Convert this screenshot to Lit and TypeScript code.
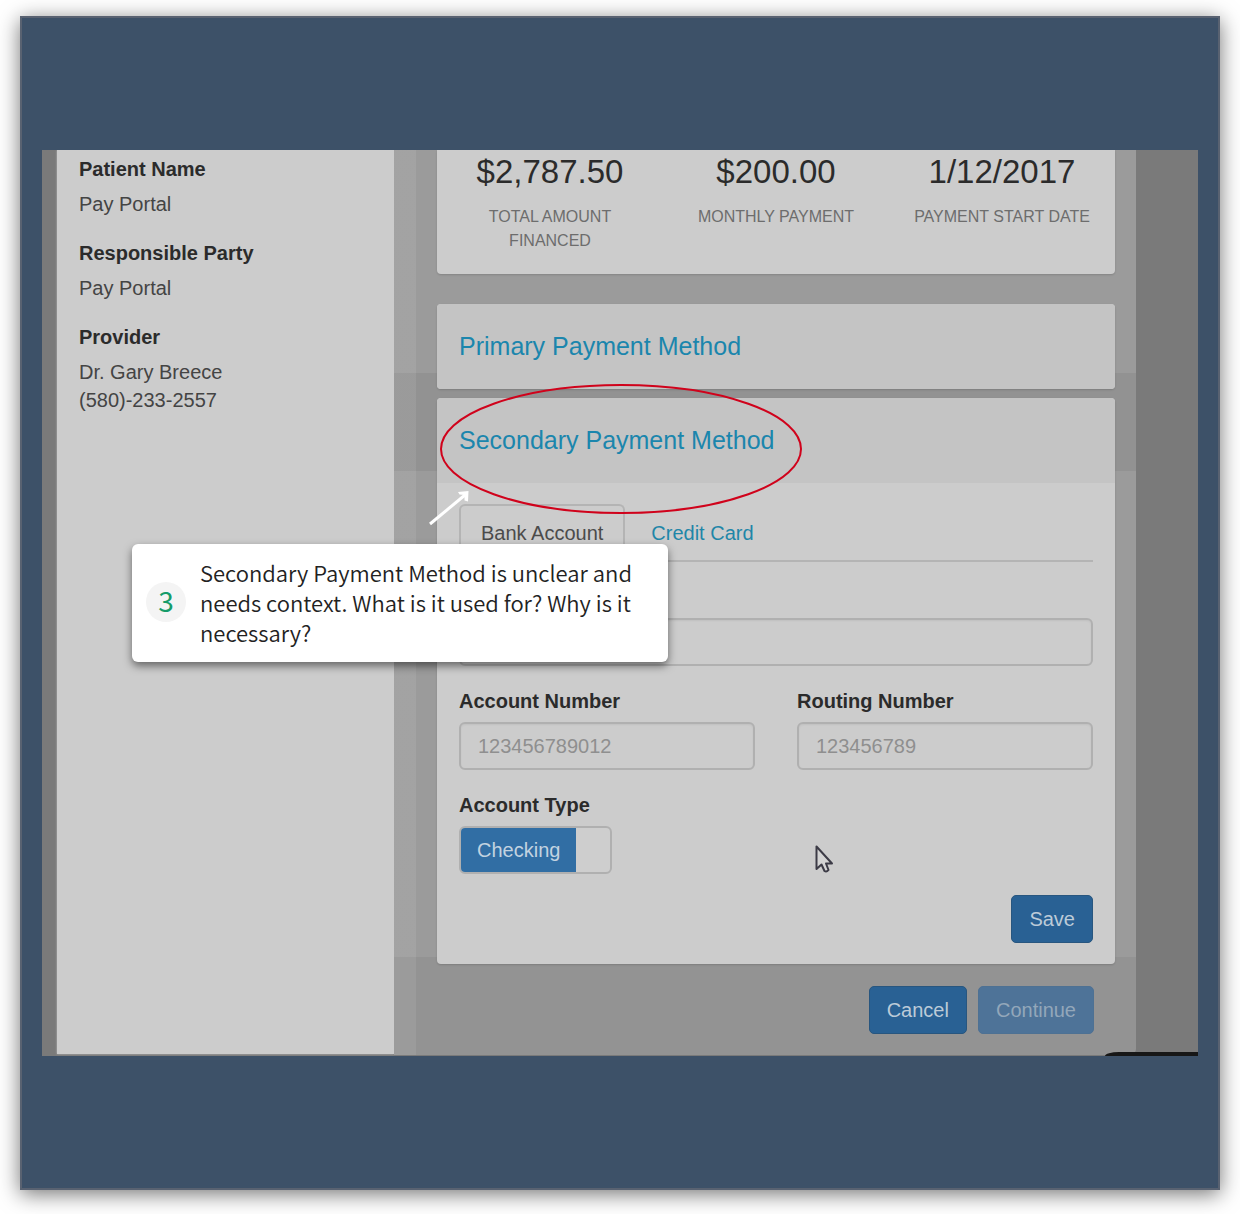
import { LitElement, html, css, svg } from "lit";
import { customElement, state } from "lit/decorators.js";

interface Detail {
  term: string;
  lines: string[];
}

interface Stat {
  value: string;
  label: string;
}

const details: Detail[] = [
  { term: "Patient Name", lines: ["Pay Portal"] },
  { term: "Responsible Party", lines: ["Pay Portal"] },
  { term: "Provider", lines: ["Dr. Gary Breece", "(580)-233-2557"] },
];

const stats: Stat[] = [
  { value: "$2,787.50", label: "TOTAL AMOUNT FINANCED" },
  { value: "$200.00", label: "MONTHLY PAYMENT" },
  { value: "1/12/2017", label: "PAYMENT START DATE" },
];

const pointer = svg`<path d="M1.5 1.5 V24 L6.5 19.5 L9.5 26 Q11.5 27.5 13.5 25 L11 18.5 H17 Z"
  fill="#d4d4d4" stroke="#3c3b46" stroke-width="2" stroke-linejoin="round"/>`;

@customElement("payment-form")
export class PaymentForm extends LitElement {
  @state() private tab = "bank";
  @state() private checking = true;

  static styles = css`
    :host {
      display: block;
      padding: 21px 22px;
    }
    .tabs {
      display: flex;
      gap: 4px;
      height: 58px;
      box-sizing: border-box;
      border-bottom: 2px solid #b4b4b4;
      margin-bottom: 21px;
    }
    .tab {
      font: inherit;
      line-height: 28px;
      height: 58px;
      padding: 0 20px;
      border: 2px solid transparent;
      background: none;
      color: #1f86a8;
      border-radius: 6px 6px 0 0;
    }
    .tab.active {
      color: #4b4b4b;
      background: #cccccc;
      border-color: #b4b4b4;
      border-bottom-color: #cccccc;
    }
    .fields {
      display: grid;
      grid-template-columns: 1fr 1fr;
      gap: 21px 42px;
    }
    .field {
      display: flex;
      flex-direction: column;
      align-items: flex-start;
      gap: 7px;
    }
    .wide {
      grid-column: 1 / -1;
      padding-top: 35px;
    }
    label {
      font-weight: bold;
      line-height: 28px;
      color: #2b2b2b;
    }
    input {
      font: inherit;
      width: 100%;
      height: 48px;
      box-sizing: border-box;
      padding: 0 17px;
      border: 2px solid #b0b0b0;
      border-radius: 6px;
      background: #cccccc;
      color: #444;
      box-shadow: inset 0 1px 2px rgba(0, 0, 0, 0.06);
    }
    input::placeholder {
      color: #8f8f8f;
      opacity: 1;
    }
    .toggle {
      font: inherit;
      display: flex;
      align-items: stretch;
      width: 153px;
      height: 48px;
      padding: 0;
      border: 2px solid #b0b0b0;
      border-radius: 6px;
      background: #cecece;
      overflow: hidden;
    }
    .on {
      display: flex;
      align-items: center;
      padding: 0 16px;
      background: #316ea4;
      color: #c3d3e0;
    }
    .actions {
      display: flex;
      justify-content: flex-end;
      margin-top: 21px;
    }
    .save {
      font: inherit;
      height: 48px;
      padding: 0 17px;
      border: 1px solid #28567f;
      border-radius: 5px;
      background: #296194;
      color: #bccbd8;
    }
  `;

  render() {
    return html`
      <div class="tabs" role="tablist">
        <button
          class="tab ${this.tab === "bank" ? "active" : ""}"
          role="tab"
          aria-selected=${this.tab === "bank"}
          @click=${() => (this.tab = "bank")}
        >Bank Account</button>
        <button
          class="tab ${this.tab === "card" ? "active" : ""}"
          role="tab"
          aria-selected=${this.tab === "card"}
          @click=${() => (this.tab = "card")}
        >Credit Card</button>
      </div>
      <div class="fields">
        <div class="field wide">
          <input type="text" aria-label="Account holder" />
        </div>
        <div class="field">
          <label for="account">Account Number</label>
          <input id="account" type="text" placeholder="123456789012" />
        </div>
        <div class="field">
          <label for="routing">Routing Number</label>
          <input id="routing" type="text" placeholder="123456789" />
        </div>
        <div class="field">
          <label for="type">Account Type</label>
          <button
            id="type"
            class="toggle"
            role="switch"
            aria-checked=${this.checking}
            @click=${() => (this.checking = !this.checking)}
          ><span class="on">Checking</span></button>
        </div>
      </div>
      <div class="actions"><button class="save">Save</button></div>
    `;
  }
}

@customElement("review-note")
export class ReviewNote extends LitElement {
  static styles = css`
    :host {
      display: flex;
      align-items: center;
      gap: 14px;
      box-sizing: border-box;
      padding: 13px 14px 15px;
      border-radius: 6px;
      background: #ffffff;
      box-shadow: 0 4px 8px rgba(0, 0, 0, 0.5);
      font-family: "Noto Sans CJK SC", "Noto Sans", sans-serif;
      font-weight: 350;
    }
    .number {
      flex: none;
      width: 40px;
      height: 40px;
      border-radius: 50%;
      background: #f4f4f4;
      color: #169c69;
      font-size: 28px;
      font-weight: 400;
      line-height: 36px;
      text-align: center;
    }
    .text {
      margin: 0;
      font-size: 22px;
      line-height: 30px;
      color: #222222;
    }
  `;

  render() {
    return html`
      <span class="number">3</span>
      <p class="text">
        Secondary Payment Method is unclear and needs context. What is it used for? Why is it
        necessary?
      </p>
    `;
  }
}

@customElement("app-root")
export class AppRoot extends LitElement {
  static styles = css`
    :host {
      display: block;
      padding: 16px 20px 24px;
      background: #ffffff;
      font-family: "Liberation Sans", Arial, sans-serif;
      font-size: 20px;
      color: #444444;
    }
    .frame {
      border: 2px solid #596271;
      padding: 132px 20px;
      background: #3d5168;
      box-shadow: 0 4px 20px rgba(0, 0, 0, 0.55);
    }
    .stage {
      position: relative;
      display: grid;
      grid-template-columns: 337px minmax(0, 1fr);
      padding: 0 62px 1px 15px;
      background: #7a7a7a;
      overflow: hidden;
    }
    .sidebar {
      margin: 0 0 1px;
      padding: 5px 22px;
      background: #cccccc;
      box-shadow: 0 0 2px #bbbbbb;
    }
    .term {
      font-weight: bold;
      line-height: 28px;
      color: #2b2b2b;
      margin-bottom: 7px;
    }
    .line {
      margin: 0;
      line-height: 28px;
    }
    .last {
      margin-bottom: 21px;
    }
    .main {
      padding: 0 21px 21px 43px;
      border-bottom-right-radius: 6px;
      background:
        linear-gradient(90deg, rgba(255, 255, 255, 0.08) 22px, transparent 22px),
        linear-gradient(
          #9b9b9b 223px,
          #929292 223px 321px,
          #9b9b9b 321px 807px,
          #939393 807px
        );
    }
    .card {
      border-radius: 4px;
      background: #cccccc;
      box-shadow: 0 1px 2px rgba(0, 0, 0, 0.15);
    }
    .stats {
      display: grid;
      grid-template-columns: repeat(3, 1fr);
      padding-bottom: 21px;
      margin-bottom: 30px;
      border-radius: 0 0 4px 4px;
      text-align: center;
    }
    .stat {
      padding: 0 20px;
    }
    .value {
      margin: 0 0 11px;
      font-size: 33px;
      line-height: 44px;
      color: #2b2b2b;
    }
    .caption {
      margin: 0;
      font-size: 16px;
      line-height: 24px;
      color: #6d6d6d;
    }
    .primary {
      margin-bottom: 9px;
    }
    .title {
      margin: 0;
      padding: 0 22px;
      font-size: 25px;
      font-weight: normal;
      line-height: 85px;
      border-radius: 4px;
      background: #c4c4c4;
    }
    .link {
      color: #1b86ad;
      text-decoration: none;
    }
    .open {
      border-radius: 4px 4px 0 0;
    }
    .footer {
      display: flex;
      justify-content: flex-end;
      gap: 11px;
      padding: 22px 21px 0 0;
    }
    .button {
      font: inherit;
      height: 48px;
      padding: 0 17px;
      border: 1px solid #28567f;
      border-radius: 5px;
      background: #296194;
      color: #bccbd8;
    }
    .button:disabled {
      border-color: #4e7193;
      background: #4e7398;
      color: #93a7ba;
    }
    .note {
      position: absolute;
      left: 90px;
      top: 394px;
      width: 536px;
    }
    .ring {
      position: absolute;
      left: 398px;
      top: 234px;
    }
    .arrow {
      position: absolute;
      left: 384px;
      top: 336px;
    }
    .pointer {
      position: absolute;
      left: 773px;
      top: 695px;
    }
    .panel-edge {
      position: absolute;
      right: 0;
      bottom: 0;
      width: 93px;
      height: 4px;
      border-top-left-radius: 14px 4px;
      background: #171717;
    }
  `;

  render() {
    return html`
      <div class="frame">
        <div class="stage">
          <dl class="sidebar">
            ${details.map(
              (d) => html`
                <dt class="term">${d.term}</dt>
                ${d.lines.map(
                  (l, i) =>
                    html`<dd class="line ${i === d.lines.length - 1 ? "last" : ""}">${l}</dd>`
                )}
              `
            )}
          </dl>
          <main class="main">
            <section class="card stats">
              ${stats.map(
                (s) => html`
                  <div class="stat">
                    <p class="value">${s.value}</p>
                    <p class="caption">${s.label}</p>
                  </div>
                `
              )}
            </section>
            <section class="card primary">
              <h2 class="title"><a class="link" href="#primary">Primary Payment Method</a></h2>
            </section>
            <section class="card">
              <h2 class="title open">
                <a class="link" href="#secondary">Secondary Payment Method</a>
              </h2>
              <payment-form></payment-form>
            </section>
            <div class="footer">
              <button class="button">Cancel</button>
              <button class="button" disabled>Continue</button>
            </div>
          </main>
          <div class="panel-edge"></div>
          <svg class="pointer" width="20" height="29" viewBox="0 0 20 29" aria-hidden="true">
            ${pointer}
          </svg>
          <svg class="ring" width="363" height="131" viewBox="0 0 363 131" aria-hidden="true">
            <ellipse cx="181" cy="65" rx="180" ry="64" fill="none" stroke="#d0021b" stroke-width="2" />
          </svg>
          <svg class="arrow" width="46" height="42" viewBox="0 0 46 42" aria-hidden="true">
            <path d="M4 38 L39 9" fill="none" stroke="#ffffff" stroke-width="3" />
            <path
              d="M32 6 L42.5 5 L42 15.5 L38.5 14.5 L38.5 9 L33.5 8.5 Z"
              fill="#ffffff"
            />
          </svg>
          <review-note class="note"></review-note>
        </div>
      </div>
    `;
  }
}
